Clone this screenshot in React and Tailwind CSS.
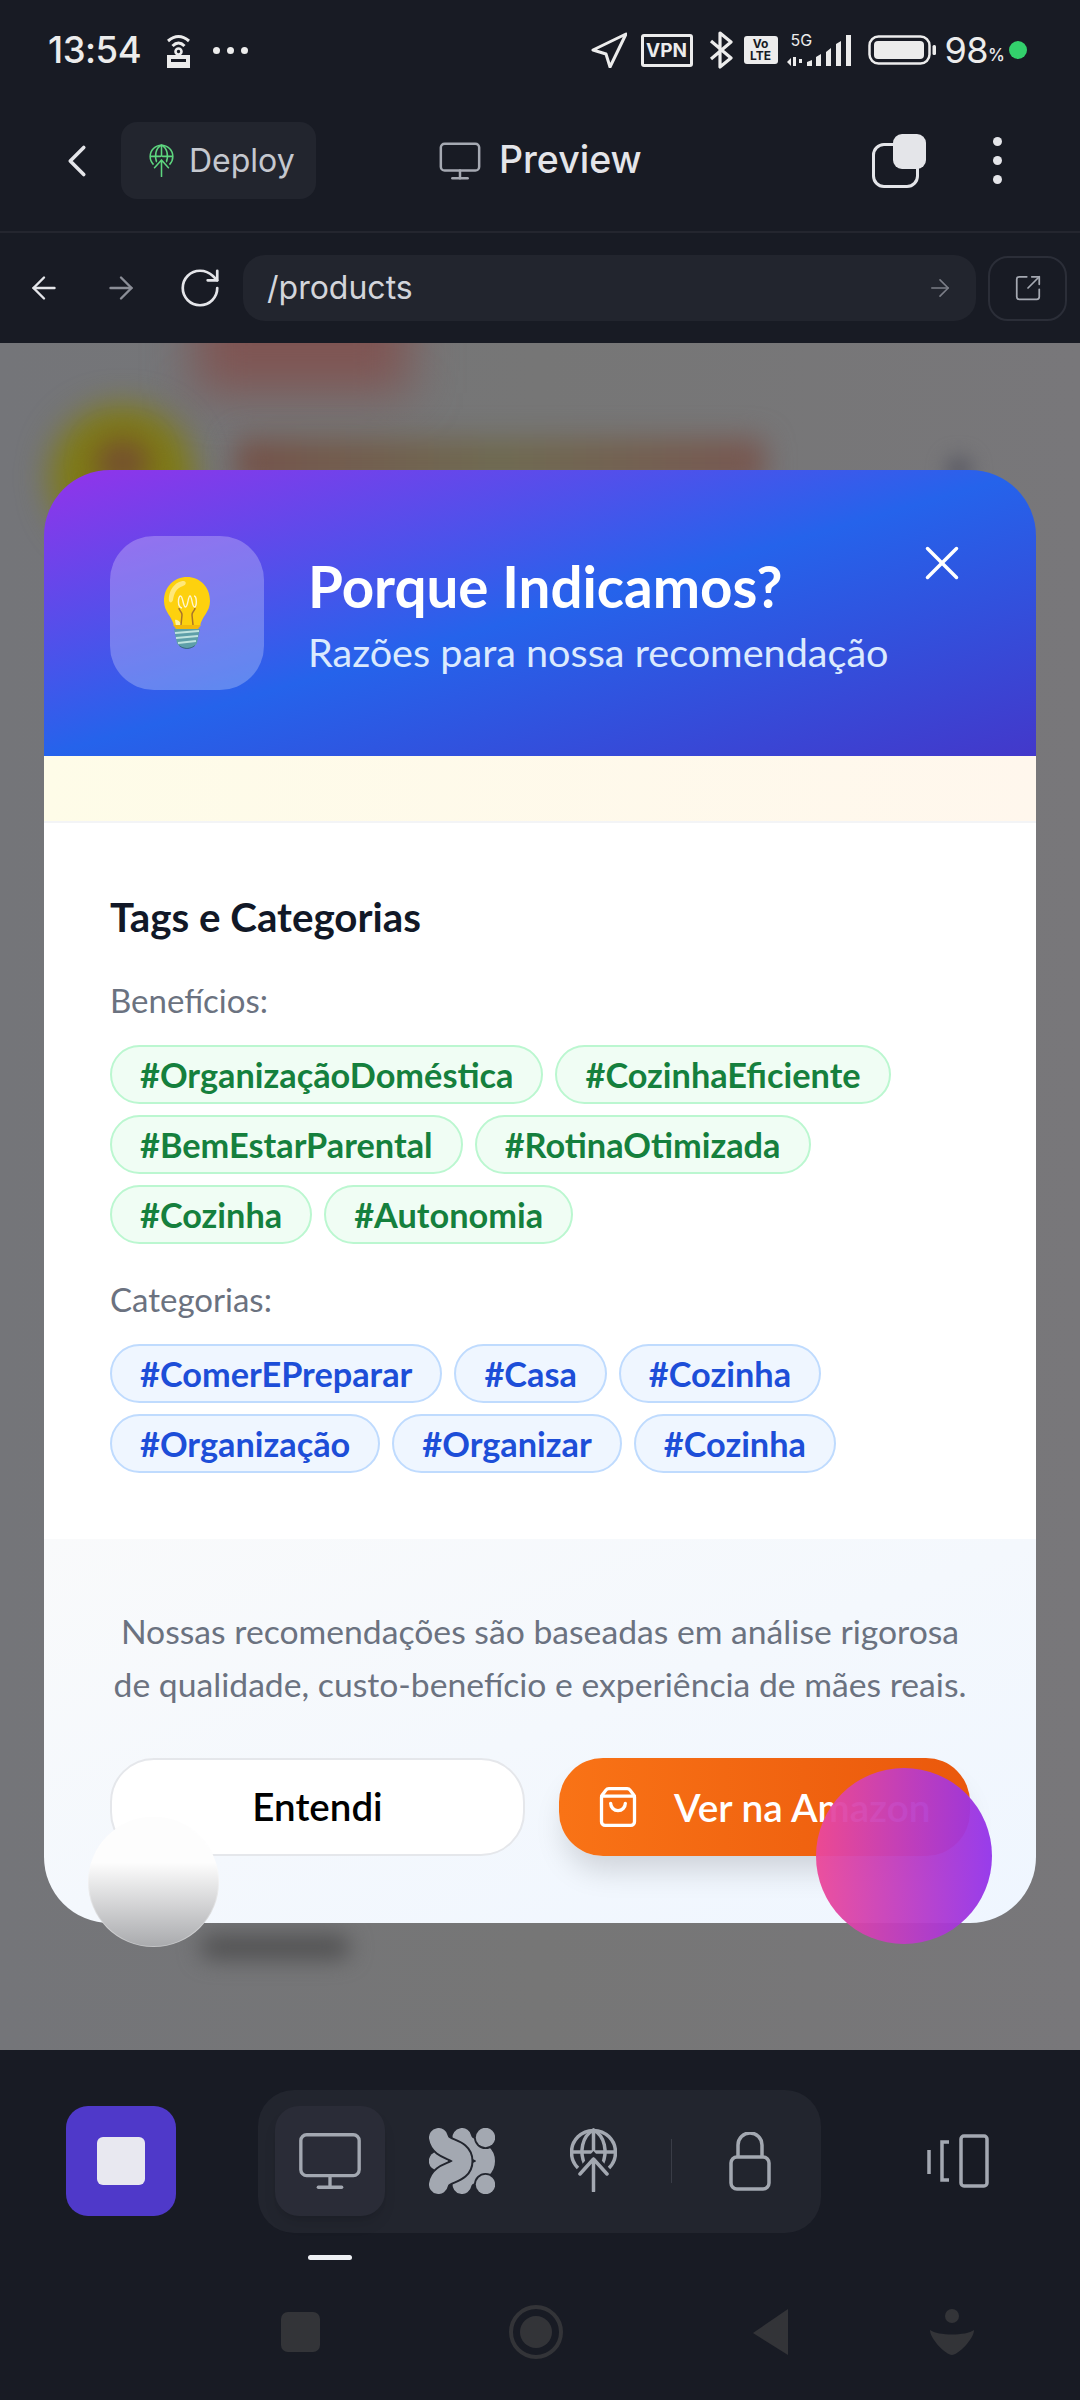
import { ArrowLeft, ArrowRight, ChevronLeft, Monitor, RotateCw, ShoppingBag, SquareArrowOutUpRight, X } from "lucide-react";

const benefits = ["#OrganizaçãoDoméstica", "#CozinhaEficiente", "#BemEstarParental", "#RotinaOtimizada", "#Cozinha", "#Autonomia"];
const categories = ["#ComerEPreparar", "#Casa", "#Cozinha", "#Organização", "#Organizar", "#Cozinha"];

function GlobeUp({ className, sw = 3.5, cut = "#22252e" }) {
  return (
    <svg viewBox="0 0 47 64" fill="none" stroke="currentColor" strokeWidth={sw} className={className}>
      <path d="M8 40A22 22 0 1 1 39 40" />
      <path d="M15 37C9 24 12 8 23.5 2C35 8 38 24 32 37" />
      <path d="M23.5 2V24M2 24H45" />
      <path d="M8 48L23.5 30L39 48" stroke={cut} strokeWidth={sw * 2.6} />
      <path d="M23.5 63V31M10 46L23.5 31L37 46" strokeLinecap="round" strokeLinejoin="round" />
    </svg>
  );
}

function Cluster({ className }) {
  const bg = "#22252e";
  const fg = "#a3a8b1";
  return (
    <svg viewBox="0 0 66 66" fill="none" strokeLinecap="round" className={className}>
      <circle cx="9.5" cy="33" r="9.7" fill={fg} />
      <path d="M33 9.5C35.5 24 56.5 19 56.5 33C56.5 47 35.5 42 33 56.5" stroke={fg} strokeWidth="19" />
      <circle cx="56.5" cy="9.5" r="11.5" fill={bg} />
      <circle cx="56.5" cy="56.5" r="11.5" fill={bg} />
      <circle cx="56.5" cy="9.5" r="9.7" fill={fg} />
      <circle cx="56.5" cy="56.5" r="9.7" fill={fg} />
      <path d="M9.5 9.5C12 24 33 19 33 33C33 47 12 42 9.5 56.5" stroke={bg} strokeWidth="23" />
      <path d="M9.5 9.5C12 24 33 19 33 33C33 47 12 42 9.5 56.5" stroke={fg} strokeWidth="19" />
    </svg>
  );
}

function Padlock({ className }) {
  return (
    <svg viewBox="0 0 42 59" fill="none" stroke="currentColor" strokeWidth="3.5" className={className}>
      <path d="M9 25V13A12 12 0 0 1 33 13V25" />
      <rect x="2" y="25" width="38" height="32" rx="6" />
    </svg>
  );
}

function Bulb() {
  return (
    <svg viewBox="0 0 46 73" className="w-[46px] h-[73px]">
      <path d="M23 0C36 0 46 10 46 24C46 35 38 39 36 49H10C8 39 0 35 0 24C0 10 10 0 23 0Z" fill="#fdd10e" />
      <path d="M5 24C4 14 11 4 20 4C23 5 22 8 19 9C12 11 10 17 9 23C8 26 6 26 5 24Z" fill="#ffe879" />
      <path d="M11 43C13 42 16 44 18 49H12Z" fill="#fff3a6" />
      <path d="M17 48L18 38C18 34 15 34 15 31M29 48L28 38C28 34 31 34 31 31" fill="none" stroke="#a8742a" strokeWidth="1.5" />
      <path d="M18 31C13 30 14 19 16.5 19C19 19 19 30 21.5 30C24 30 24 19 26 19C28 19 28 30 30.5 30C33 30 33 19 30 19" fill="none" stroke="#fff6d0" strokeWidth="1.4" />
      <path d="M9 48H37L34 52H12Z" fill="#f2b90b" />
      <path d="M10 52H36L33 66C30 73 16 73 13 66Z" fill="#5e9fa8" />
      <path d="M11 56L35 54M12 61L34 59M14 66L32 64" stroke="#bfe3df" strokeWidth="2" />
      <path d="M15 68C19 72 27 72 31 68C29 73 17 73 15 68Z" fill="#2f5d73" />
    </svg>
  );
}

function Tag({ text, tone }) {
  const cls = tone === "green"
    ? "bg-[#f0fdf4] border-[#bbf7d0] text-[#15803d]"
    : "bg-[#eff6ff] border-[#bfdbfe] text-[#1d4ed8]";
  return (
    <span className={`h-[59px] px-[28px] flex items-center rounded-full border-2 text-[34.3px] font-bold ${cls}`}>
      {text}
    </span>
  );
}

function StatusBar() {
  return (
    <div className="h-[100px] flex items-center pl-[48px] pr-[53px] text-[#ececec]">
      <span className="text-[36.5px] font-medium tracking-[-0.5px]">13:54</span>
      <svg viewBox="0 0 25 35" className="ml-[25px] w-[25px] h-[35px]" fill="none" stroke="currentColor">
        <path d="M2 8Q12.5 -1 23 8" strokeWidth="3" />
        <path d="M6.5 13Q12.5 7 18.5 13" strokeWidth="3" />
        <circle cx="12.5" cy="18.5" r="3" strokeWidth="2.6" />
        <path fillRule="evenodd" fill="currentColor" stroke="none" d="M1 22H24V35H1ZM5 26V29H20V26Z" />
      </svg>
      <div className="ml-[22px] flex gap-[7px]">
        <span className="w-[7px] h-[7px] rounded-full bg-[#ececec]" />
        <span className="w-[7px] h-[7px] rounded-full bg-[#ececec]" />
        <span className="w-[7px] h-[7px] rounded-full bg-[#ececec]" />
      </div>
      <svg viewBox="0 0 36 36" className="ml-auto w-[36px] h-[36px]" fill="none" stroke="currentColor" strokeWidth="3" strokeLinejoin="round">
        <path d="M2 18L35 2L19 35L15 22Z" />
      </svg>
      <span className="ml-[14px] w-[52px] h-[33px] border-[3px] border-[#ececec] rounded-[3px] flex items-center justify-center text-[19px] font-bold leading-none">VPN</span>
      <svg viewBox="0 0 25 38" className="ml-[16px] w-[25px] h-[38px]" fill="none" stroke="currentColor" strokeWidth="3.2" strokeLinejoin="round">
        <path d="M2 10L22 27L11 36V2L22 11L2 28" />
      </svg>
      <span className="ml-[10px] w-[34px] h-[28px] rounded-[3px] bg-[#ececec] flex flex-col items-center justify-center text-[#181b24] text-[12px] leading-[12px] font-bold">
        <span>Vo</span>
        <span>LTE</span>
      </span>
      <div className="ml-[9px] relative w-[67px] h-[34px]">
        <span className="absolute left-[4px] top-[-3px] text-[16px] leading-[20px]">5G</span>
        <svg viewBox="0 0 67 34" className="w-[67px] h-[34px]" fill="currentColor">
          <path d="M0 29L4 25V33ZM6 24H9V33H6ZM12 26H15V30H12ZM20 29L25 27V33H20ZM29 24L34 21V33H29ZM39 19L44 15V33H39ZM49 11L54 8V33H49ZM59 2H64V33H59Z" />
        </svg>
      </div>
      <svg viewBox="0 0 68 30" className="ml-[14px] w-[68px] h-[30px]" fill="none">
        <rect x="1.5" y="1.5" width="60" height="27" rx="9" stroke="currentColor" strokeWidth="2.5" />
        <rect x="6" y="6" width="50" height="18" rx="4" fill="currentColor" />
        <rect x="64.5" y="10" width="3.5" height="10" rx="1.5" fill="currentColor" />
      </svg>
      <span className="ml-[9px] text-[36px] tracking-[-0.5px] font-normal">98</span>
      <span className="text-[17px] self-center mt-[12px] font-medium">%</span>
      <span className="ml-[4px] w-[18px] h-[18px] rounded-full bg-[#33d06c]" />
    </div>
  );
}

function TopBar() {
  return (
    <div className="h-[133px] pb-[10px] flex items-center border-b-2 border-[#24262f] text-[#e4e5e9]">
      <ChevronLeft className="ml-[50px] w-[54px] h-[54px]" strokeWidth={1.6} />
      <div className="ml-[17px] w-[195px] h-[77px] rounded-[16px] bg-[#22252e] flex items-center pl-[28px]">
        <GlobeUp className="w-[25px] h-[33px] text-[#5ed67f]" sw={3} />
        <span className="ml-[15px] text-[32px] text-[#c5c8cf]">Deploy</span>
      </div>
      <Monitor className="ml-[121px] w-[46px] h-[46px] text-[#a5a9b2]" strokeWidth={1.3} />
      <span className="ml-[16px] text-[37.5px] font-medium">Preview</span>
      <div className="ml-[230px] relative w-[54px] h-[54px]">
        <div className="absolute left-0 bottom-0 w-[47px] h-[45px] rounded-[12px] border-[3px] border-[#e4e5e9]" />
        <div className="absolute right-0 top-0 w-[33px] h-[35px] rounded-[9px] bg-[#e4e5e9]" />
      </div>
      <div className="ml-[67px] flex flex-col gap-[10px]">
        <span className="w-[9px] h-[9px] rounded-full bg-[#e4e5e9]" />
        <span className="w-[9px] h-[9px] rounded-full bg-[#e4e5e9]" />
        <span className="w-[9px] h-[9px] rounded-full bg-[#e4e5e9]" />
      </div>
    </div>
  );
}

function UrlBar() {
  return (
    <div className="h-[110px] flex items-center pl-[26px]">
      <ArrowLeft className="w-[36px] h-[36px] text-[#e4e5e9]" strokeWidth={1.6} />
      <ArrowRight className="ml-[41px] w-[36px] h-[36px] text-[#8b8e97]" strokeWidth={1.6} />
      <RotateCw className="ml-[38px] w-[46px] h-[46px] text-[#e4e5e9]" strokeWidth={1.4} />
      <div className="ml-[20px] w-[733px] h-[66px] rounded-[22px] bg-[#22252e] flex items-center justify-between pl-[24px] pr-[22px]">
        <span className="text-[32px] text-[#d3d5db]">/products</span>
        <ArrowRight className="w-[28px] h-[28px] text-[#7b7e87]" strokeWidth={1.4} />
      </div>
      <div className="ml-[12px] w-[79px] h-[65px] rounded-[20px] border-2 border-[#2b2e38] flex items-center justify-center">
        <SquareArrowOutUpRight className="w-[30px] h-[30px] text-[#a5a9b2]" strokeWidth={1.4} />
      </div>
    </div>
  );
}

function Modal() {
  return (
    <div className="relative w-[992px] rounded-[66px] overflow-hidden flex flex-col font-['Lato',sans-serif]">
      <div className="h-[286px] pl-[66px] flex items-start bg-linear-to-br/srgb from-[#9333ea] via-[#2563eb] to-[#4338ca]">
        <div className="mt-[66px] w-[154px] h-[154px] rounded-[44px] bg-white/25 flex items-center justify-center">
          <Bulb />
        </div>
        <div className="ml-[44px] mt-[83px] flex flex-col">
          <span className="text-[56.5px] leading-[66px] font-bold text-white">Porque Indicamos?</span>
          <span className="text-[39.6px] leading-[50px] mt-[8px] text-[#dbeafe]">Razões para nossa recomendação</span>
        </div>
        <X className="ml-auto mt-[64px] mr-[65px] w-[58px] h-[58px] text-white" strokeWidth={1.45} />
      </div>

      <div className="h-[67px] border-b-2 border-[#f3f4f6] bg-linear-to-r/srgb from-[#fefce8] to-[#fff7ed]" />

      <div className="bg-white px-[66px] pt-[64px] pb-[66px] flex flex-col">
        <span className="text-[40.3px] leading-[60px] font-bold text-[#111827]">Tags e Categorias</span>
        <span className="mt-[31px] text-[33px] leading-[44px] text-[#6b7280]">Benefícios:</span>
        <div className="mt-[23px] flex flex-wrap gap-x-[12px] gap-y-[11px]">
          {benefits.map((t) => <Tag key={t} text={t} tone="green" />)}
        </div>
        <span className="mt-[33px] text-[33px] leading-[44px] text-[#6b7280]">Categorias:</span>
        <div className="mt-[23px] flex flex-wrap gap-x-[12px] gap-y-[11px]">
          {categories.map((t, i) => <Tag key={i} text={t} tone="blue" />)}
        </div>
      </div>

      <div className="px-[66px] pt-[66px] pb-[67px] bg-linear-to-br/srgb from-[#f9fafb] to-[#eff6ff]">
        <p className="text-center text-[33.7px] leading-[53px] text-[#6b7280] whitespace-nowrap">
          Nossas recomendações são baseadas em análise rigorosa
          <br />
          de qualidade, custo-benefício e experiência de mães reais.
        </p>
        <div className="mt-[47px] flex justify-between">
          <button className="w-[415px] h-[98px] rounded-[44px] border-2 border-[#e5e7eb] bg-white text-[38.5px] font-semibold text-black">
            Entendi
          </button>
          <button className="w-[411px] h-[98px] rounded-[44px] bg-linear-to-r/srgb from-[#f97316] to-[#ea580c] shadow-[0_20px_30px_-6px_rgba(0,0,0,0.15)] flex items-center pl-[37px] text-[38.8px] font-semibold text-white">
            <ShoppingBag className="w-[44px] h-[44px]" strokeWidth={1.8} />
            <span className="ml-[34px]">Ver na Amazon</span>
          </button>
        </div>
      </div>
    </div>
  );
}

function BottomBar() {
  return (
    <div className="h-[350px] flex flex-col">
      <div className="h-[183px] flex items-start pl-[66px] pt-[40px]">
        <div className="mt-[16px] w-[110px] h-[110px] rounded-[22px] bg-[#4f39c9] flex items-center justify-center">
          <span className="w-[48px] h-[48px] rounded-[6px] bg-[#e8e8f0]" />
        </div>
        <div className="ml-[82px] w-[563px] h-[143px] rounded-[36px] bg-[#22252e] flex items-start pl-[17px] pt-[16px] text-[#a3a8b1]">
          <div className="w-[110px] h-[110px] rounded-[24px] bg-[#2a2c37] shadow-lg flex items-center justify-center">
            <Monitor className="w-[70px] h-[70px]" strokeWidth={1.15} />
          </div>
          <Cluster className="ml-[44px] mt-[22px] w-[66px] h-[66px]" />
          <GlobeUp className="ml-[75px] mt-[22px] w-[47px] h-[64px]" />
          <span className="ml-[54px] mt-[33px] w-[1px] h-[44px] bg-[#3a3d47]" />
          <Padlock className="ml-[57px] mt-[26px] w-[42px] h-[59px]" />
        </div>
        <svg viewBox="0 0 62 54" className="ml-[106px] mt-[44px] w-[62px] h-[54px] text-[#a3a8b1]" fill="none" stroke="currentColor" strokeWidth="3.5">
          <path d="M2 16V40M22 8H15V46H22" />
          <rect x="34" y="2" width="26" height="50" rx="3" />
        </svg>
      </div>
      <span className="ml-[308px] mt-[22px] w-[44px] h-[5px] rounded-full bg-[#eef0f4]" />
      <div className="mt-[47px] h-[50px] flex items-center text-[#333438]">
        <span className="ml-[281px] w-[39px] h-[40px] rounded-[7px] bg-[#333438]" />
        <span className="ml-[189px] w-[54px] h-[54px] rounded-full border-[4px] border-[#333438] flex items-center justify-center">
          <span className="w-[32px] h-[32px] rounded-full bg-[#333438]" />
        </span>
        <svg viewBox="0 0 37 46" className="ml-[189px] w-[37px] h-[46px]" fill="currentColor"><path d="M36 0V46L1 24Z" /></svg>
        <svg viewBox="0 0 44 46" className="ml-[141px] w-[44px] h-[46px]" fill="currentColor">
          <circle cx="22" cy="7" r="7" />
          <path d="M0 21C8 27 36 27 44 21C44 30 28 46 22 46C16 46 0 30 0 21Z" />
        </svg>
      </div>
    </div>
  );
}

export default function App() {
  return (
    <div className="relative w-[1080px] h-[2400px] overflow-hidden flex flex-col bg-[#181b24] font-['Inter',sans-serif]">
      <StatusBar />
      <TopBar />
      <UrlBar />
      <div className="relative flex-1 overflow-hidden bg-linear-to-r/srgb from-[#747579] via-[#767676] to-[#78777a] flex items-center justify-center">
        <div className="absolute left-[195px] top-[-50px] w-[215px] h-[100px] bg-[#7f5553] blur-[24px]" />
        <div className="absolute left-[50px] top-[62px] w-[145px] h-[145px] rounded-full bg-[#7f7b14] blur-[16px]" />
        <div className="absolute left-[95px] top-[95px] w-[55px] h-[50px] rounded-full bg-[#75502e] blur-[14px]" />
        <div className="absolute left-[235px] top-[95px] w-[530px] h-[50px] rounded-[10px] bg-linear-to-r/srgb from-[#75524a] via-[#6f6a50] to-[#785650] blur-[14px]" />
        <div className="absolute left-[945px] top-[112px] w-[28px] h-[30px] rounded-full bg-[#5f5f68] blur-[9px]" />
        <div className="absolute left-[200px] top-[1592px] w-[150px] h-[24px] rounded-full bg-[#505051] blur-[11px]" />
        <Modal />
      </div>
      <BottomBar />
      <div className="absolute left-[88px] top-[1817px] w-[131px] h-[130px] rounded-full border border-white/30 bg-origin-border bg-linear-to-b/srgb from-[#fdfdfd] from-35% to-[#a9aaad]" />
      <div className="absolute left-[816px] top-[1768px] w-[176px] h-[176px] rounded-full opacity-95 bg-linear-to-r/srgb from-[#ec4899] to-[#9333ea]" />
    </div>
  );
}
